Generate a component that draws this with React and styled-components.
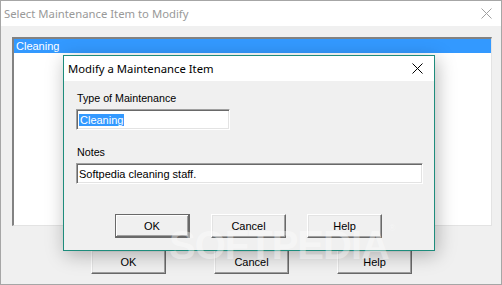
import React from 'react';
import styled, { createGlobalStyle, css } from 'styled-components';

const GlobalStyle = createGlobalStyle`
  html, body {
    margin: 0;
    padding: 0;
    background: #f0f0f0;
  }
  * {
    box-sizing: border-box;
  }
`;

const Window = styled.div`
  position: relative;
  width: 502px;
  height: 285px;
  background: #f0f0f0;
  border: 1px solid #a6a6a6;
  display: flex;
  flex-direction: column;
  font-family: 'Liberation Sans', Arial, sans-serif;
  font-size: 11px;
  color: #000;
  overflow: hidden;
`;

const TitleBar = styled.div`
  height: 25px;
  flex: none;
  background: #fff;
  display: flex;
  align-items: center;
  justify-content: space-between;
  padding: 0 ${(p) => p.$pad || 9}px 0 ${(p) => p.$left || 3}px;
  font-family: 'Noto Sans', 'Segoe UI', sans-serif;
  font-size: 11.3px;
  color: ${(p) => (p.$active ? '#000' : '#999')};
`;

const CloseIcon = ({ color }) => (
  <svg width="11" height="11" viewBox="0 0 11 11">
    <path d="M0.5 0.5 L10.5 10.5 M10.5 0.5 L0.5 10.5" stroke={color} strokeWidth="1" fill="none" />
  </svg>
);

const Body = styled.div`
  flex: 1;
  display: flex;
  flex-direction: column;
  padding: 11px 9px 0 11px;
`;

const ListBox = styled.div`
  height: 189px;
  background: #fff;
  border-top: 2px solid #828282;
  border-left: 2px solid #828282;
  border-right: 1px solid #e3e3e3;
  border-bottom: 1px solid #e3e3e3;
`;

const ListItem = styled.div`
  height: 14px;
  line-height: 14px;
  padding-left: 2px;
  background: ${(p) => (p.$selected ? '#3399ff' : 'transparent')};
  color: ${(p) => (p.$selected ? '#fff' : '#000')};
`;

const ButtonRow = styled.div`
  display: flex;
  gap: ${(p) => p.$gap}px;
  padding-left: ${(p) => p.$left}px;
  margin-top: ${(p) => p.$top}px;
`;

const Button = styled.button`
  width: 75px;
  height: 24px;
  padding: 0;
  font-family: 'Liberation Sans', Arial, sans-serif;
  font-size: 11px;
  color: #000;
  background: #f0f0f0;
  border-top: 1px solid #fff;
  border-left: 1px solid #fff;
  border-right: 1px solid #696969;
  border-bottom: 1px solid #696969;
  box-shadow: inset -1px -1px 0 #a0a0a0, inset 1px 1px 0 #e3e3e3;
  ${(p) =>
    p.$default &&
    css`
      border: 1px solid #696969;
      border-bottom-width: 2px;
      border-right-width: 2px;
      box-shadow: inset 1px 1px 0 #fff, inset -1px -1px 0 #a0a0a0;
    `}
`;

const Dialog = styled.div`
  position: absolute;
  left: 62px;
  top: 54px;
  width: 372px;
  height: 196px;
  background: #f0f0f0;
  border: 1px solid #1e8c7c;
  box-shadow: 2px 4px 18px rgba(0, 0, 0, 0.28);
  display: flex;
  flex-direction: column;
`;

const DialogBody = styled.div`
  flex: 1;
  display: flex;
  flex-direction: column;
  padding: 11px 11px 0 12px;
`;

const Label = styled.div`
  height: 13px;
  line-height: 13px;
  margin-top: ${(p) => p.$top || 0}px;
  padding-left: 1px;
  font-size: 10.7px;
`;

const TextField = styled.div`
  width: ${(p) => p.$width}px;
  height: 21px;
  margin-top: 4px;
  background: #fff;
  border-top: 1px solid #a0a0a0;
  border-left: 1px solid #a0a0a0;
  border-right: 1px solid #fff;
  border-bottom: 1px solid #fff;
  box-shadow: inset 1px 1px 0 #696969, inset -1px -1px 0 #e3e3e3;
  padding: 3px 2px 0 2px;
  line-height: 14px;
`;

const Selected = styled.span`
  background: #3399ff;
  color: #fff;
  padding: 0 1px;
`;

const Watermark = styled.div`
  position: absolute;
  left: 168px;
  top: 222px;
  font-family: 'Liberation Sans', Arial, sans-serif;
  font-weight: bold;
  font-size: 40px;
  letter-spacing: -1px;
  color: rgba(255, 255, 255, 0.38);
  pointer-events: none;
  sup {
    font-size: 9px;
    font-weight: normal;
    vertical-align: top;
  }
`;

export default function App() {
  return (
    <>
      <GlobalStyle />
      <Window>
        <TitleBar>
          <span>Select Maintenance Item to Modify</span>
          <CloseIcon color="#a0a0a0" />
        </TitleBar>
        <Body>
          <ListBox>
            <ListItem $selected>Cleaning</ListItem>
          </ListBox>
          <ButtonRow $left={79} $gap={48} $top={24}>
            <Button>OK</Button>
            <Button>Cancel</Button>
            <Button>Help</Button>
          </ButtonRow>
        </Body>
        <Dialog>
          <TitleBar $active $left={4} $pad={11}>
            <span>Modify a Maintenance Item</span>
            <CloseIcon color="#000" />
          </TitleBar>
          <DialogBody>
            <Label>Type of Maintenance</Label>
            <TextField $width={154}>
              <Selected>Cleaning</Selected>
            </TextField>
            <Label $top={16}>Notes</Label>
            <TextField $width={347}>Softpedia cleaning staff.</TextField>
            <ButtonRow $left={39} $gap={21} $top={30}>
              <Button $default>OK</Button>
              <Button>Cancel</Button>
              <Button>Help</Button>
            </ButtonRow>
          </DialogBody>
        </Dialog>
        <Watermark>
          SOFTPEDIA<sup>®</sup>
        </Watermark>
      </Window>
    </>
  );
}
